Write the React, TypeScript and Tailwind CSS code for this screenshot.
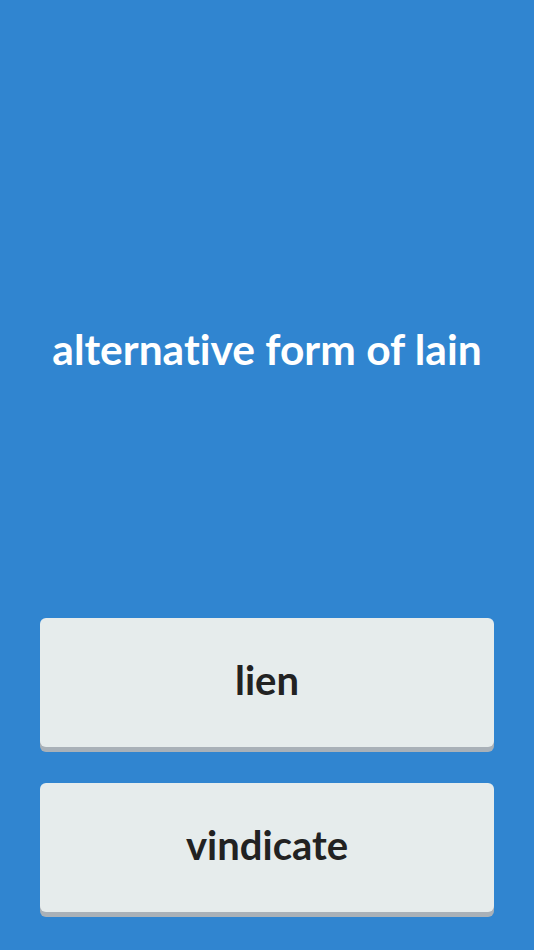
export default function App() {
    const answers = ['lien', 'vindicate'];

    return (
        <div
            className="h-[950px] w-full bg-[#3085d0] flex flex-col [font-variant-ligatures:none]"
            style={{ fontFamily: 'Lato, "Open Sans", sans-serif' }}
        >
            {/* Prompt */}
            <div className="flex-1 flex items-center justify-center pt-[80px] px-6">
                <h1 className="text-white font-bold text-[42.5px] leading-none text-center">
                    alternative form of lain
                </h1>
            </div>

            {/* Answers */}
            <div className="flex flex-col gap-[31px] px-10 pb-[33px]">
                {answers.map((a) => (
                    <button
                        key={a}
                        type="button"
                        className="h-[129px] w-full rounded-md bg-[#e6ecec] shadow-[0_5px_0_#a9b1b8] flex items-center justify-center pb-[6px] mb-[5px]"
                    >
                        <span className="text-[#222222] font-bold text-[40px] leading-none">{a}</span>
                    </button>
                ))}
            </div>
        </div>
    );
}
